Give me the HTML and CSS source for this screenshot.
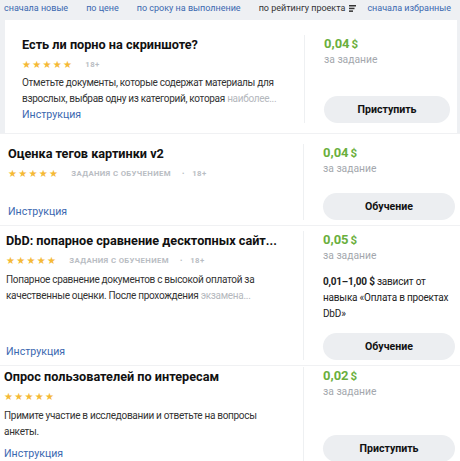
FILE: index.html
```html
<!DOCTYPE html>
<html lang="ru">
<head>
<meta charset="utf-8">
<link rel="stylesheet" href="styles.css">
</head>
<body>
<nav class="sort">
  <a class="sort-link">сначала новые</a>
  <a class="sort-link">по цене</a>
  <a class="sort-link">по сроку на выполнение</a>
  <span class="sort-active">по рейтингу проекта
    <svg class="sort-icon" width="7" height="7" viewBox="0 0 7 7"><rect x="0" y="0" width="7" height="1.5" fill="#333"/><rect x="0" y="2.7" width="5.5" height="1.5" fill="#333"/><rect x="0" y="5.4" width="4" height="1.5" fill="#333"/></svg>
  </span>
  <a class="sort-link sort-last">сначала избранные</a>
</nav>

<section class="card card-1">
  <div class="main">
    <h2 class="title">Есть ли порно на скриншоте?</h2>
    <div class="meta"><span class="stars">★★★★★</span><span class="tag">18+</span></div>
    <p class="desc">Отметьте документы, которые содержат материалы для<br>взрослых, выбрав одну из категорий, которая <span class="fade">наиболее...</span></p>
    <a class="instr">Инструкция</a>
  </div>
  <div class="side">
    <div class="price">0,04<span class="cur">$</span></div>
    <div class="per">за задание</div>
    <button class="btn">Приступить</button>
  </div>
</section>

<section class="card card-2">
  <div class="main">
    <h2 class="title">Оценка тегов картинки v2</h2>
    <div class="meta"><span class="stars">★★★★★</span><span class="tag">Задания с обучением</span><span class="dot">•</span><span class="tag">18+</span></div>
    <a class="instr">Инструкция</a>
  </div>
  <div class="side side-wide">
    <div class="price">0,04<span class="cur">$</span></div>
    <div class="per">за задание</div>
    <button class="btn">Обучение</button>
  </div>
</section>

<section class="card card-3">
  <div class="main">
    <h2 class="title">DbD: попарное сравнение десктопных сайт...</h2>
    <div class="meta"><span class="stars">★★★★★</span><span class="tag">Задания с обучением</span><span class="dot">•</span><span class="tag">18+</span></div>
    <p class="desc">Попарное сравнение документов с высокой оплатой за<br>качественные оценки. После прохождения <span class="fade">экзамена...</span></p>
    <a class="instr">Инструкция</a>
  </div>
  <div class="side side-wide">
    <div class="price">0,05<span class="cur">$</span></div>
    <div class="per">за задание</div>
    <p class="skill"><b>0,01–1,00 $</b> зависит от<br>навыка «Оплата в проектах<br>DbD»</p>
    <button class="btn">Обучение</button>
  </div>
</section>

<section class="card card-4">
  <div class="main">
    <h2 class="title">Опрос пользователей по интересам</h2>
    <div class="meta"><span class="stars">★★★★★</span></div>
    <p class="desc">Примите участие в исследовании и ответьте на вопросы<br>анкеты.</p>
    <a class="instr">Инструкция</a>
  </div>
  <div class="side side-wide">
    <div class="price">0,02<span class="cur">$</span></div>
    <div class="per">за задание</div>
    <button class="btn">Приступить</button>
  </div>
</section>
</body>
</html>
```

FILE: styles.css
```css
* { box-sizing: border-box; }
html, body { margin: 0; padding: 0; }
body {
  width: 460px;
  height: 461px;
  overflow: hidden;
  background: #eef0f3;
  font-family: Roboto, "Noto Sans", sans-serif;
  color: #222;
}
.sort {
  display: flex;
  align-items: center;
  height: 20px;
  padding: 0 0 4px 4px;
  font-size: 9px;
  white-space: nowrap;
}
.sort-link { color: #3a68b0; margin-right: 18px; }
.sort-last { margin-right: 0; }
.sort-active { color: #333; margin-right: 11px; display: flex; align-items: center; gap: 4px; }
.sort-icon { display: block; }

.card {
  display: flex;
  background: #fff;
}
.card-1 { margin: 0 3px 0 5px; height: 113px; padding: 15px 7px 10px 17px; }
.card-2 { height: 92px; padding: 10px 5px 5px 8px; border-top: 1px solid #f0f1f3; }
.card-3 { height: 140px; padding: 5px 5px 5px 6px; border-top: 1px solid #f0f1f3; }
.card-4 { height: 97px; padding: 1px 5px 0 4px; border-top: 1px solid #f0f1f3; }
.main {
  flex: 1;
  display: flex;
  flex-direction: column;
  min-width: 0;
}
.title {
  margin: 0;
  font-size: 12.7px;
  line-height: 20px;
  font-weight: 700;
  color: #111;
  white-space: nowrap;
}
.meta {
  display: flex;
  align-items: center;
  height: 19px;
  white-space: nowrap;
}
.stars {
  color: #f5b935;
  font-family: "DejaVu Sans", sans-serif;
  font-size: 10px;
  letter-spacing: 1.3px;
  margin-right: 12px;
}
.tag {
  font-size: 7.8px;
  font-weight: 700;
  color: #b9bdc3;
  text-transform: uppercase;
  letter-spacing: 0.35px;
}
.dot { font-size: 7px; color: #b9bdc3; margin: 0 8px 0 11px; }
.desc {
  margin: 2px 0 0;
  font-size: 10px;
  letter-spacing: -0.3px;
  line-height: 16px;
  color: #333;
  white-space: nowrap;
}
.fade { color: #b5b8bd; }
.instr {
  margin-top: auto;
  font-size: 10.6px;
  line-height: 16px;
  color: #3a68b0;
}
.side {
  width: 146px;
  flex: none;
  display: flex;
  flex-direction: column;
  border-left: 1px solid #eef0f2;
  padding-left: 19px;
}
.side-wide { width: 152px; }
.price {
  font-size: 13px;
  font-weight: 700;
  line-height: 18px;
  color: #6aaf3d;
}
.cur { font-size: 11.5px; margin-left: 2px; }
.per {
  font-size: 10.3px;
  line-height: 14px;
  color: #a3a7ad;
}
.skill {
  margin: 11px 0 0;
  font-size: 10px;
  letter-spacing: -0.2px;
  line-height: 16px;
  color: #222;
  white-space: nowrap;
}
.skill b { font-weight: 700; }
.btn {
  margin-top: auto;
  height: 27px;
  border: none;
  border-radius: 14px;
  background: #eceef1;
  font-family: inherit;
  font-size: 10.6px;
  font-weight: 700;
  color: #111;
  width: 100%;
}
```
